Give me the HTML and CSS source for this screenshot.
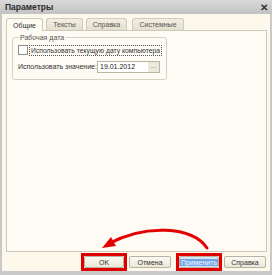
FILE: index.html
```html
<!DOCTYPE html>
<html>
<head>
	<title>Параметры</title>
	<meta charset="utf-8">
	<link rel="stylesheet" href="styles.css">
</head>
<body>
	<div class="window">
		<div class="titlebar">
			<span class="title">Параметры</span>
			<span class="close">✕</span>
		</div>
		<div class="content">
			<div class="tabs">
				<div class="tab active tab-general">Общие</div>
				<div class="tab tab-texts">Тексты</div>
				<div class="tab tab-help">Справка</div>
				<div class="tab tab-system">Системные</div>
			</div>
			<div class="panel">
				<fieldset class="group">
					<legend>Рабочая дата</legend>
					<div class="row">
						<span class="check"></span>
						<span class="check-label">Использовать текущую дату компьютера</span>
					</div>
					<div class="row row-value">
						<span class="caption">Использовать значение:</span>
						<span class="input">19.01.2012<span class="dots">...</span></span>
					</div>
				</fieldset>
			</div>
			<div class="buttons">
				<div class="mark"><div class="btn btn-ok">OK</div></div>
				<div class="btn btn-cancel">Отмена</div>
				<div class="mark mark-apply"><div class="btn btn-apply"><span>Применить</span></div></div>
				<div class="btn btn-help">Справка</div>
			</div>
		</div>
		<!-- стрелка поверх окна -->
		<svg class="arrow" width="272" height="275" viewBox="0 0 272 275">
			<path d="M207 248 C192 226 145 224 108 244" fill="none" stroke="#e50000" stroke-width="3" stroke-linecap="round"/>
			<polygon points="102,248 111,237 116,246" fill="#e50000"/>
		</svg>
	</div>
</body>
</html>
```

FILE: styles.css
```css
body{
	margin: 0;
	font-family: "Liberation Sans", Arial, sans-serif;
	font-size: 7px;
	color: #3a3a3a;
}
.window{
	position: relative;
	width: 272px;
	height: 275px;
	background: #c9c9c9;
	display: flex;
	flex-direction: column;
}
.titlebar{
	height: 14px;
	background: linear-gradient(#d9d9d9, #c2c2c2);
	display: flex;
	align-items: center;
	justify-content: space-between;
	padding: 0 4px 0 5px;
}
.title{
	font-weight: bold;
	font-size: 8.5px;
	color: #2b2b2b;
}
.close{
	font-size: 10px;
	font-weight: bold;
	color: #333;
}
.content{
	flex: 1;
	margin: 0 2px 4px 2px;
	background: #fcf8ec;
	display: flex;
	flex-direction: column;
	padding: 3px 3px 0 4px;
}
.tabs{
	display: flex;
	height: 13px;
	align-items: flex-end;
}
.tab{
	height: 12px;
	margin-right: 3px;
	border: 1px solid #cfcbbb;
	border-bottom: none;
	border-radius: 3px 3px 0 0;
	background: linear-gradient(#f1eee2, #e4e0cf);
	display: flex;
	align-items: center;
	justify-content: center;
	color: #555;
	box-sizing: border-box;
}
.tab.active{
	height: 13px;
	background: #fdfbf4;
	color: #333;
	position: relative;
	top: 1px;
}
.tab-general{ width: 37px; }
.tab-texts{ width: 37px; }
.tab-help{ width: 41px; margin-right: 5px; }
.tab-system{ width: 52px; }
.panel{
	height: 222px;
	width: 261px;
	box-sizing: border-box;
	border: 1px solid #cdc9b9;
	background: #fdfbf4;
	padding: 3px 5px;
}
.group{
	margin: 0;
	width: 153px;
	height: 46px;
	box-sizing: border-box;
	border: 1px solid #d6d2c3;
	border-radius: 3px;
	padding: 3px 4px 0 5px;
}
.group legend{
	padding: 0 1px;
	margin-left: 1px;
	color: #555;
}
.row{
	display: flex;
	align-items: center;
	height: 12px;
}
.check{
	width: 8px;
	height: 8px;
	border: 1px solid #8f8f8f;
	background: #fff;
	margin-right: 1px;
}
.check-label{
	border: 1px dotted #555;
	padding: 0 1px;
	font-size: 6.8px;
	line-height: 9px;
	white-space: nowrap;
	color: #333;
}
.row-value{
	margin-top: 4px;
	height: 13px;
}
.caption{
	width: 79px;
	white-space: nowrap;
	color: #333;
}
.input{
	width: 63px;
	height: 12px;
	box-sizing: border-box;
	border: 1px solid #b8b4a4;
	background: #fff;
	display: flex;
	align-items: center;
	justify-content: space-between;
	padding-left: 2px;
	color: #222;
}
.dots{
	width: 11px;
	height: 10px;
	background: #ece8da;
	text-align: center;
	line-height: 7px;
	color: #777;
}
.buttons{
	display: flex;
	align-items: center;
	height: 18px;
	margin-top: 1px;
	padding-left: 75px;
}
.btn{
	height: 12px;
	box-sizing: border-box;
	border: 1px solid #b7b3a3;
	border-radius: 2px;
	background: linear-gradient(#fbfaf4, #ebe7d9);
	display: flex;
	align-items: center;
	justify-content: center;
	color: #333;
}
.mark{
	border: 3px solid #e00000;
}
.btn-ok{ width: 40px; }
.btn-cancel{ width: 42px; margin: 0 5px 0 2px; }
.mark-apply{ margin-right: 2px; }
.btn-apply{ width: 40px; background: #d8e6f7; }
.btn-apply span{
	background: #6fa5e6;
	color: #f4f8ff;
	padding: 0 1px;
}
.btn-help{ width: 42px; }
.arrow{
	position: absolute;
	left: 0;
	top: 0;
}
```
